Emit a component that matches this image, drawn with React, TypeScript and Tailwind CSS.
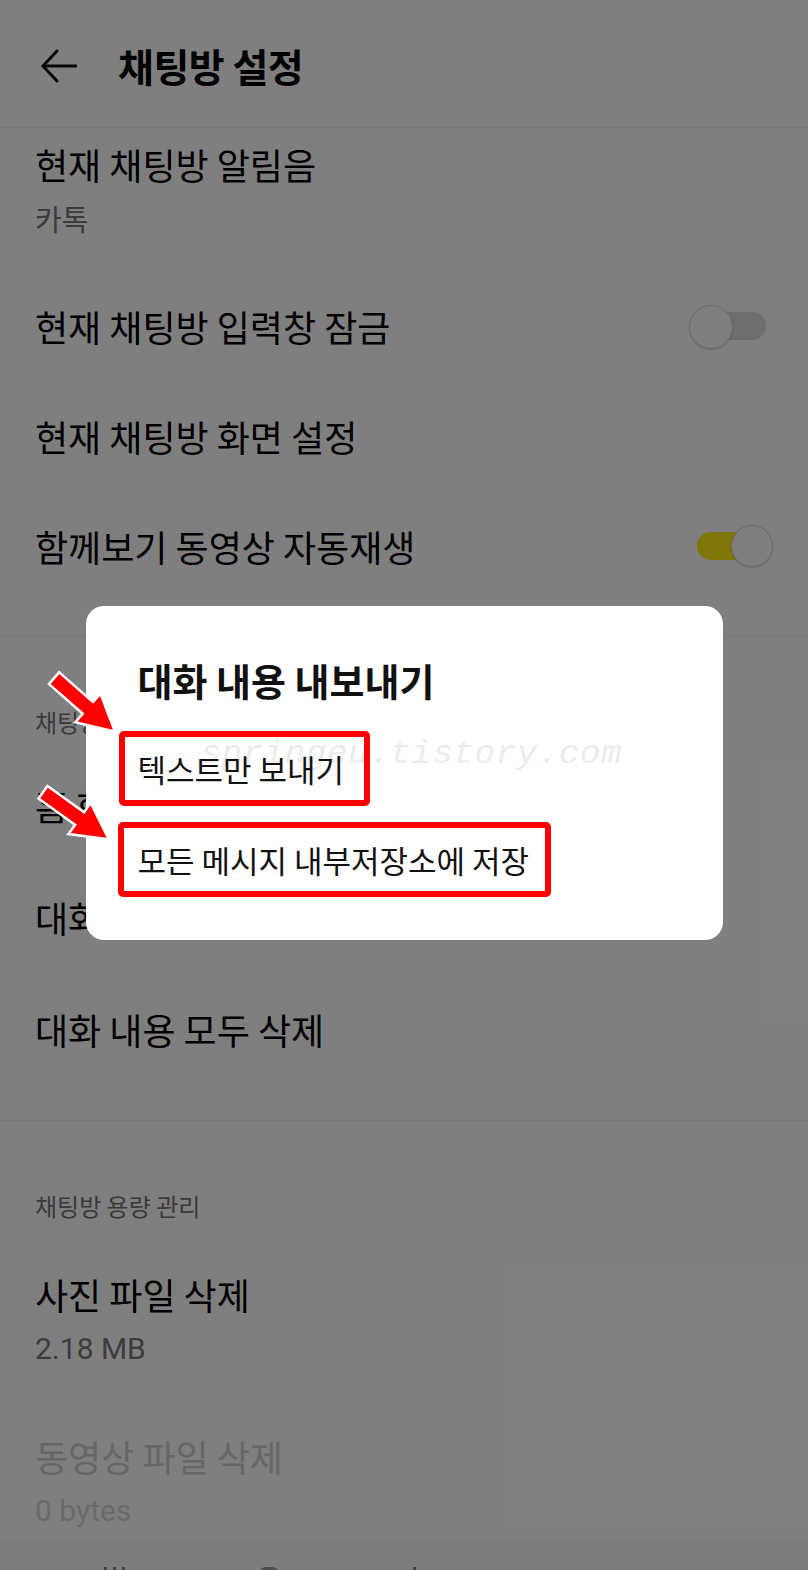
import React from "react";

/* Data */

const chatRoomItems = [
    { label: "홈 화면에 바로가기 추가" },
    { label: "대화 내용 내보내기" },
    { label: "대화 내용 모두 삭제" },
];

/* Sub-components */

function Toggle({ on }: { on: boolean }) {
    if (on) {
        return (
            <div className="relative w-[76px] h-[44px] shrink-0">
                <div className="absolute left-0 top-[8px] w-[50px] h-[28px] rounded-full bg-[#ffee10]" />
                <div className="absolute right-0 top-[1px] w-[42px] h-[42px] rounded-full bg-white border border-[#d8d8d8] shadow-[0_1px_2px_rgba(0,0,0,0.15)]" />
            </div>
        );
    }
    return (
        <div className="relative w-[77px] h-[44px] shrink-0">
            <div className="absolute left-[11px] top-[8px] w-[66px] h-[28px] rounded-full bg-[#dcdcdc]" />
            <div className="absolute left-0 top-[1px] w-[44px] h-[44px] rounded-full bg-white border border-[#d8d8d8] shadow-[0_1px_2px_rgba(0,0,0,0.15)]" />
        </div>
    );
}

function SectionHeader({ title }: { title: string }) {
    return (
        <div className="pt-[70px] pb-[12px] pl-[35px]">
            <p className="text-[24px] leading-[30px] text-[#757575]">{title}</p>
        </div>
    );
}

function Arrow({ x, y, angle }: { x: number; y: number; angle: number }) {
    return (
        <g transform={`translate(${x},${y}) rotate(${angle})`}>
            <polygon
                points="0,-6.5 45,-6.5 45,-17 77,0 45,17 45,6.5 0,6.5"
                fill="#ff0000"
                stroke="#ffffff"
                strokeWidth={5}
                strokeLinejoin="miter"
                paintOrder="stroke"
            />
        </g>
    );
}

function Option({ label, pl, pr }: { label: string; pl: string; pr: string }) {
    return (
        <div className={`inline-flex items-center h-[75px] border-[6px] border-[#ff0000] rounded-[5px] ${pl} ${pr}`}>
            <span className="text-[31px] leading-none text-[#111]">{label}</span>
        </div>
    );
}

export default function App() {
    return (
        <div className="relative w-[808px] h-[1570px] overflow-hidden bg-white font-['Noto_Sans_CJK_KR','Noto_Sans',sans-serif] text-black flex flex-col">
            <main className="flex-1 overflow-hidden">
                {/* Header */}
                <header className="h-[128px] flex items-center pt-[4px] pl-[41px] border-b border-[#eeeeee]">
                    <svg width="36" height="36" viewBox="0 0 36 36" fill="none" stroke="#111" strokeWidth="3" strokeLinecap="round" strokeLinejoin="round">
                        <path d="M2 18H35" />
                        <path d="M16 3L2 18L16 33" />
                    </svg>
                    <h1 className="ml-[41px] text-[39px] leading-none font-bold tracking-[-0.5px]">채팅방 설정</h1>
                </header>

                {/* Current chat room */}
                <section>
                    <div className="pt-[16px] pb-[37px] pl-[35px]">
                        <p className="text-[36px] leading-[40px]">현재 채팅방 알림음</p>
                        <p className="mt-[18px] text-[29px] leading-[32px] text-[#787878]">카톡</p>
                    </div>
                    <div className="h-[110px] flex items-center justify-between pl-[35px] pr-[42px]">
                        <p className="text-[36px]">현재 채팅방 입력창 잠금</p>
                        <Toggle on={false} />
                    </div>
                    <div className="h-[110px] flex items-center pl-[35px]">
                        <p className="text-[36px]">현재 채팅방 화면 설정</p>
                    </div>
                    <div className="h-[110px] flex items-center justify-between pl-[35px] pr-[35px]">
                        <p className="text-[36px]">함께보기 동영상 자동재생</p>
                        <Toggle on />
                    </div>
                    <div className="h-[35px]" />
                </section>

                {/* Chat room management */}
                <section className="border-t border-[#eeeeee]">
                    <SectionHeader title="채팅방 관리" />
                    {chatRoomItems.map((item) => (
                        <div key={item.label} className="h-[112px] flex items-center pl-[35px]">
                            <p className="text-[36px]">{item.label}</p>
                        </div>
                    ))}
                    <div className="h-[35px]" />
                </section>

                {/* Storage */}
                <section className="border-t border-[#eeeeee]">
                    <SectionHeader title="채팅방 용량 관리" />
                    <div className="pt-[41px] pb-[30px] pl-[35px]">
                        <p className="text-[36px] leading-[40px]">사진 파일 삭제</p>
                        <p className="mt-[19px] text-[30px] leading-[32px] text-[#787878] font-['Roboto',sans-serif]">2.18 MB</p>
                    </div>
                    <div className="pt-[41px] pb-[30px] pl-[35px]">
                        <p className="text-[36px] leading-[40px] text-[#cfcfcf]">동영상 파일 삭제</p>
                        <p className="mt-[19px] text-[30px] leading-[32px] text-[#d6d6d6] font-['Roboto',sans-serif]">0 bytes</p>
                    </div>
                </section>
            </main>

            {/* Nav bar */}
            <nav className="h-[30px] bg-[#fafafa] flex justify-between items-start pt-[27px] pl-[104px] pr-[392px]">
                <div className="flex gap-[6px]">
                    <div className="w-[3px] h-[10px] bg-[#888]" />
                    <div className="w-[3px] h-[10px] bg-[#888]" />
                    <div className="w-[3px] h-[10px] bg-[#888]" />
                </div>
                <div className="w-[20px] h-[20px] rounded-[7px] border-[3px] border-[#999]" />
                <div className="w-[3px] h-[3px] bg-[#888]" />
            </nav>

            {/* Dim overlay + dialog */}
            <div className="absolute inset-0 bg-black/50 flex justify-center items-start pt-[606px]">
                <div className="relative w-[637px] h-[334px] rounded-[18px] bg-white">
                    <p className="absolute left-[115px] top-[126px] text-[34px] leading-[44px] italic tracking-[0.02em] text-[#ececec] font-['Liberation_Mono',monospace] select-none">
                        springeu.tistory.com
                    </p>
                    <div className="relative pt-[50px]">
                        <h2 className="pl-[52px] text-[38px] leading-[48px] font-bold text-[#111]">대화 내용 내보내기</h2>
                        <div className="mt-[27px] pl-[33px] flex flex-col items-start gap-[16px]">
                            <Option label="텍스트만 보내기" pl="pl-[13px]" pr="pr-[20px]" />
                            <div className="-ml-[1px]">
                                <Option label="모든 메시지 내부저장소에 저장" pl="pl-[14px]" pr="pr-[16px]" />
                            </div>
                        </div>
                    </div>
                </div>

                {/* Annotation arrows */}
                <svg className="absolute left-0 top-[640px] pointer-events-none" width="140" height="220" viewBox="0 640 140 220">
                    <Arrow x={55} y={679} angle={41.3} />
                    <Arrow x={44} y={793} angle={35.6} />
                </svg>
            </div>
        </div>
    );
}
